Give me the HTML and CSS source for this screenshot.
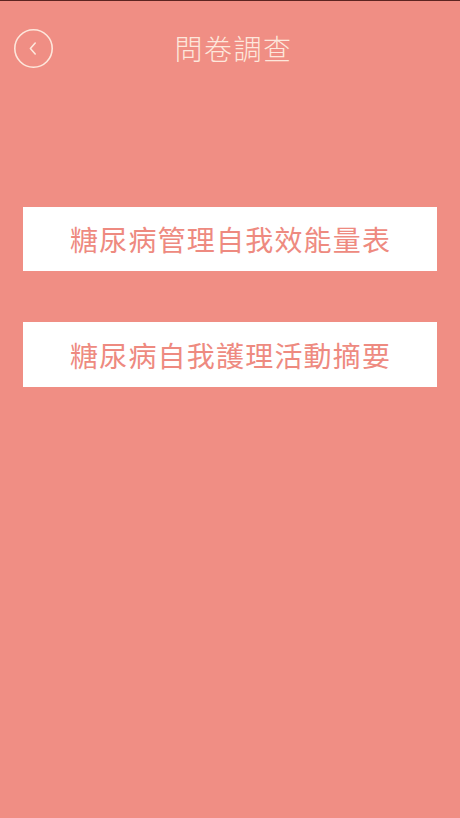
FILE: index.html
```html
<!DOCTYPE html>
<html lang="zh-Hant">
<head>
<meta charset="utf-8">
<title>問卷調查</title>
<link rel="stylesheet" href="styles.css">
</head>
<body>
<div class="screen">
  <header class="header">
    <button class="back" aria-label="返回">
      <svg width="40" height="40" viewBox="0 0 40 40">
        <circle cx="19.5" cy="19.5" r="18.7" fill="none" stroke="#fde7dc" stroke-width="1.6"/>
        <path d="M21.2 14 L16.4 19.5 L21.2 25" fill="none" stroke="#fde7dc" stroke-width="1.6" stroke-linecap="round" stroke-linejoin="round"/>
      </svg>
    </button>
    <h1 class="title">問卷調查</h1>
  </header>
  <main class="list">
    <a class="card" href="#">糖尿病管理自我效能量表</a>
    <a class="card" href="#">糖尿病自我護理活動摘要</a>
  </main>
</div>
</body>
</html>
```
FILE: styles.css
```css
html, body {
  margin: 0;
  padding: 0;
}
body {
  background: #f08e84;
  font-family: "Noto Sans CJK TC", "Noto Sans CJK SC", sans-serif;
}
.screen {
  width: 460px;
  height: 818px;
  border-top: 1px solid #5c2420;
  box-sizing: border-box;
  background: #f08e84;
}
.header {
  position: relative;
  height: 96px;
  display: flex;
  align-items: flex-start;
  justify-content: center;
}
.back {
  position: absolute;
  left: 14px;
  top: 28px;
  width: 40px;
  height: 40px;
  padding: 0;
  margin: 0;
  border: none;
  background: transparent;
}
.back svg {
  display: block;
}
.title {
  margin: 27px 0 0 7px;
  font-size: 28px;
  line-height: 40px;
  font-weight: 300;
  letter-spacing: 1.5px;
  color: #fde7dc;
}
.list {
  display: flex;
  flex-direction: column;
  gap: 51px;
  padding: 110px 23px 0 23px;
}
.card {
  display: flex;
  align-items: center;
  justify-content: center;
  height: 64px;
  background: #ffffff;
  color: #ee8a80;
  font-size: 28px;
  font-weight: 400;
  letter-spacing: 1.2px;
  text-indent: 1.2px;
  text-decoration: none;
}
.card + .card {
  height: 65px;
}
```
